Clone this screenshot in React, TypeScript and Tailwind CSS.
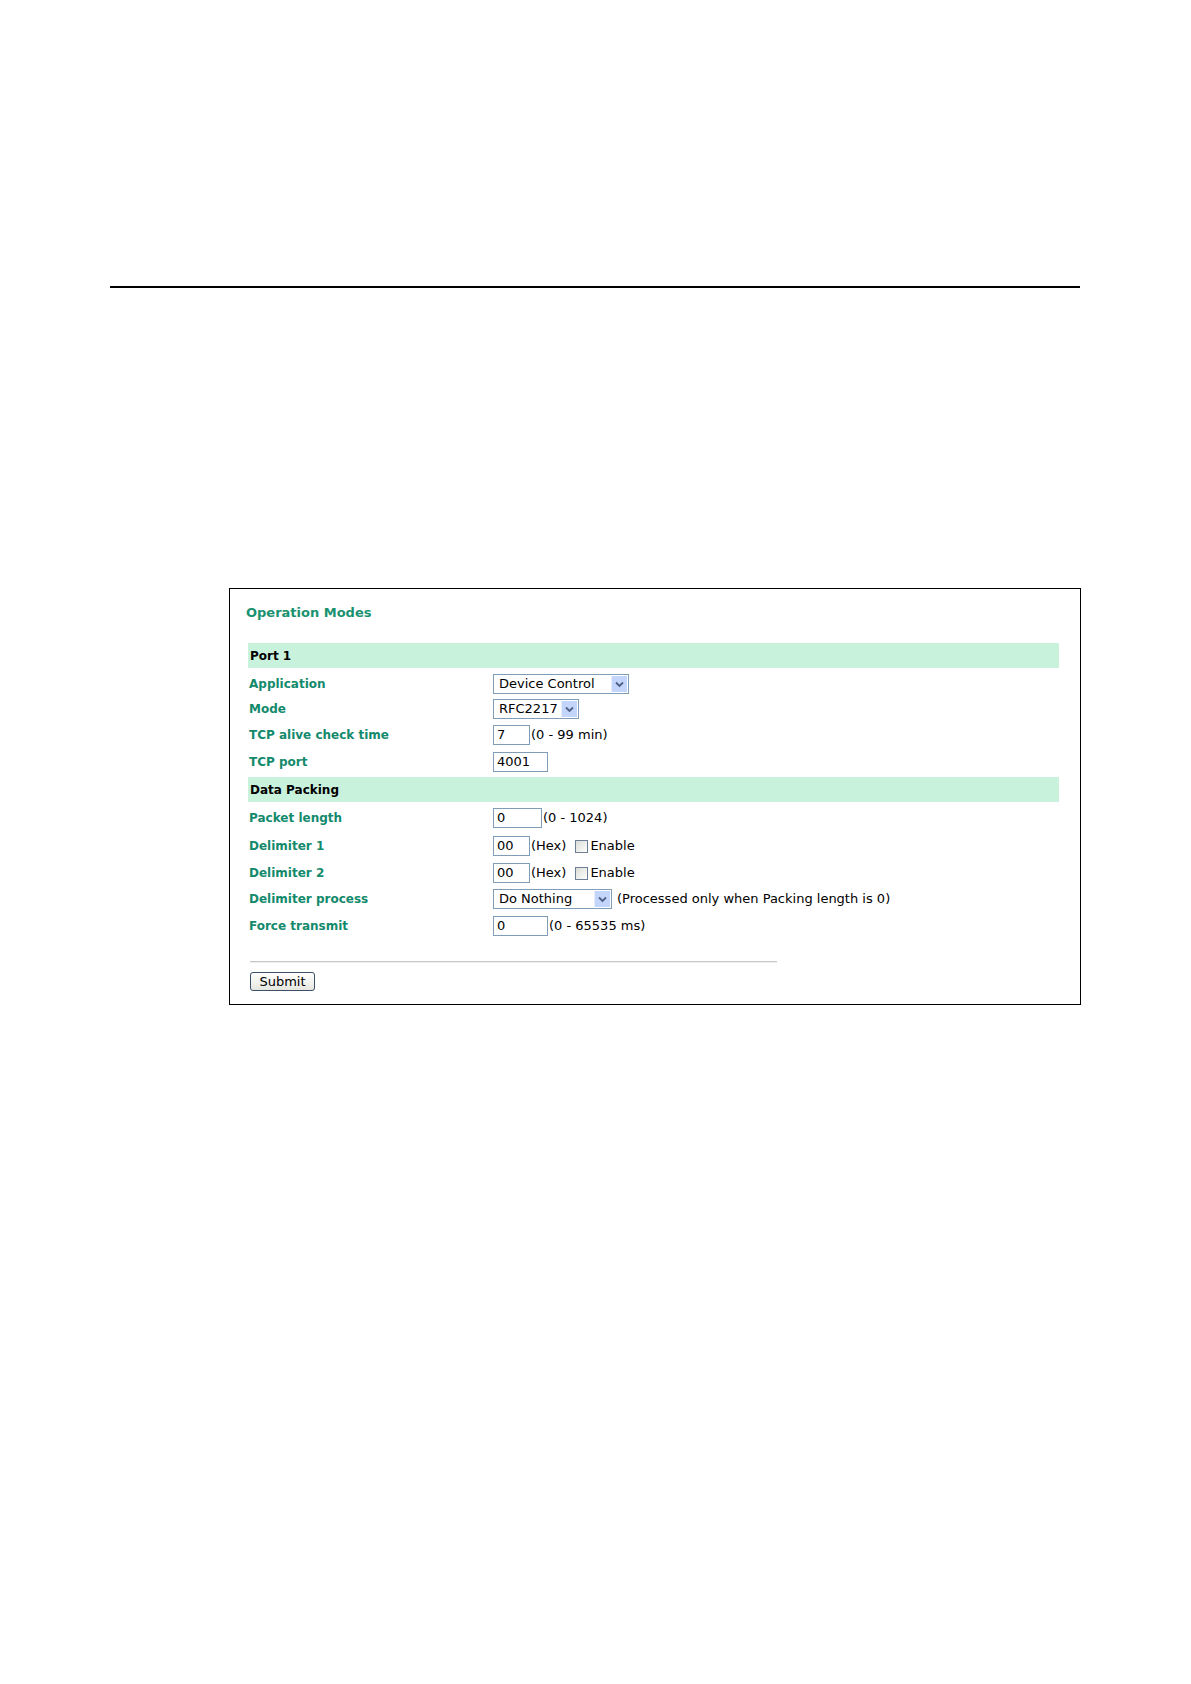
import React from 'react';

const font = { fontFamily: '"DejaVu Sans", Verdana, sans-serif' };

const Chevron: React.FC = () => (
  <span className="flex h-full w-[16px] items-center justify-center bg-[#c3d5fb] border-l border-[#e6eefe]">
    <svg width="9" height="7" viewBox="0 0 9 7">
      <path d="M1 1.5 L4.5 5 L8 1.5" fill="none" stroke="#4d6185" strokeWidth="1.8" />
    </svg>
  </span>
);

const Select: React.FC<{ value: string; width: string }> = ({ value, width }) => (
  <div className={`flex h-[20px] ${width} items-stretch border border-[#7f9db9] bg-white p-[1px]`}>
    <span className="flex-1 pl-[4px] text-[13px] leading-[16px] text-black">{value}</span>
    <Chevron />
  </div>
);

const Input: React.FC<{ value: string; width: string }> = ({ value, width }) => (
  <div className={`h-[20px] ${width} border border-[#7f9db9] bg-white pl-[3px] text-[13px] leading-[18px] text-black`}>
    {value}
  </div>
);

const Check: React.FC = () => (
  <span className="ml-[9px] mr-[2px] inline-block h-[13px] w-[13px] border border-[#6d7f95] bg-gradient-to-br from-[#dcdcd6] to-white" />
);

const Note: React.FC<{ children: React.ReactNode; className?: string }> = ({ children, className = '' }) => (
  <span className={`text-[13px] text-black ${className}`}>{children}</span>
);

const Band: React.FC<{ title: string; className?: string }> = ({ title, className = '' }) => (
  <div className={`flex h-[25px] items-center bg-[#c9f2dd] pl-[2px] text-[12px] font-bold text-black ${className}`}>
    {title}
  </div>
);

const Row: React.FC<{ label: string; children: React.ReactNode; h: string }> = ({ label, children, h }) => (
  <div className={`flex ${h} items-end`}>
    <div className="flex h-[20px] w-[245px] items-center pl-[1px] text-[12px] font-bold text-[#138a6c]">{label}</div>
    <div className="flex h-[20px] items-center">{children}</div>
  </div>
);

export default function App() {
  return (
    <div className="h-[1684px] w-[1191px] bg-white pt-[286px]" style={font}>
      <div className="ml-[110px] h-[2px] w-[970px] bg-black" />

      <div className="ml-[229px] mt-[300px] h-[417px] w-[852px] border border-black pl-[18px] pr-[21px] pt-[14px]">
        <div className="-ml-[2px] h-[40px] text-[13px] font-bold text-[#1a9270]">Operation Modes</div>

        <Band title="Port 1" />
        <Row label="Application" h="h-[26px]">
          <Select value="Device Control" width="w-[136px]" />
        </Row>
        <Row label="Mode" h="h-[25px]">
          <Select value="RFC2217" width="w-[86px]" />
        </Row>
        <Row label="TCP alive check time" h="h-[26px]">
          <Input value="7" width="w-[37px]" />
          <Note className="ml-[1px]">(0 - 99 min)</Note>
        </Row>
        <Row label="TCP port" h="h-[27px]">
          <Input value="4001" width="w-[55px]" />
        </Row>

        <Band title="Data Packing" className="mt-[5px]" />
        <Row label="Packet length" h="h-[26px]">
          <Input value="0" width="w-[49px]" />
          <Note className="ml-[1px]">(0 - 1024)</Note>
        </Row>
        <Row label="Delimiter 1" h="h-[28px]">
          <Input value="00" width="w-[37px]" />
          <Note className="ml-[1px]">(Hex)</Note>
          <Check />
          <Note>Enable</Note>
        </Row>
        <Row label="Delimiter 2" h="h-[27px]">
          <Input value="00" width="w-[37px]" />
          <Note className="ml-[1px]">(Hex)</Note>
          <Check />
          <Note>Enable</Note>
        </Row>
        <Row label="Delimiter process" h="h-[26px]">
          <Select value="Do Nothing" width="w-[119px]" />
          <Note className="ml-[5px]">(Processed only when Packing length is 0)</Note>
        </Row>
        <Row label="Force transmit" h="h-[27px]">
          <Input value="0" width="w-[55px]" />
          <Note className="ml-[1px]">(0 - 65535 ms)</Note>
        </Row>

        <div className="ml-[2px] mt-[25px] h-[2px] w-[527px] bg-[#c8c8c8] border-b border-[#eeeeee]" />
        <button className="ml-[2px] mt-[9px] flex h-[19px] w-[65px] items-center justify-center rounded-[3px] border border-[#3c5068] bg-gradient-to-b from-white to-[#e6e6e0] text-[13px] text-black">
          Submit
        </button>
      </div>
    </div>
  );
}
